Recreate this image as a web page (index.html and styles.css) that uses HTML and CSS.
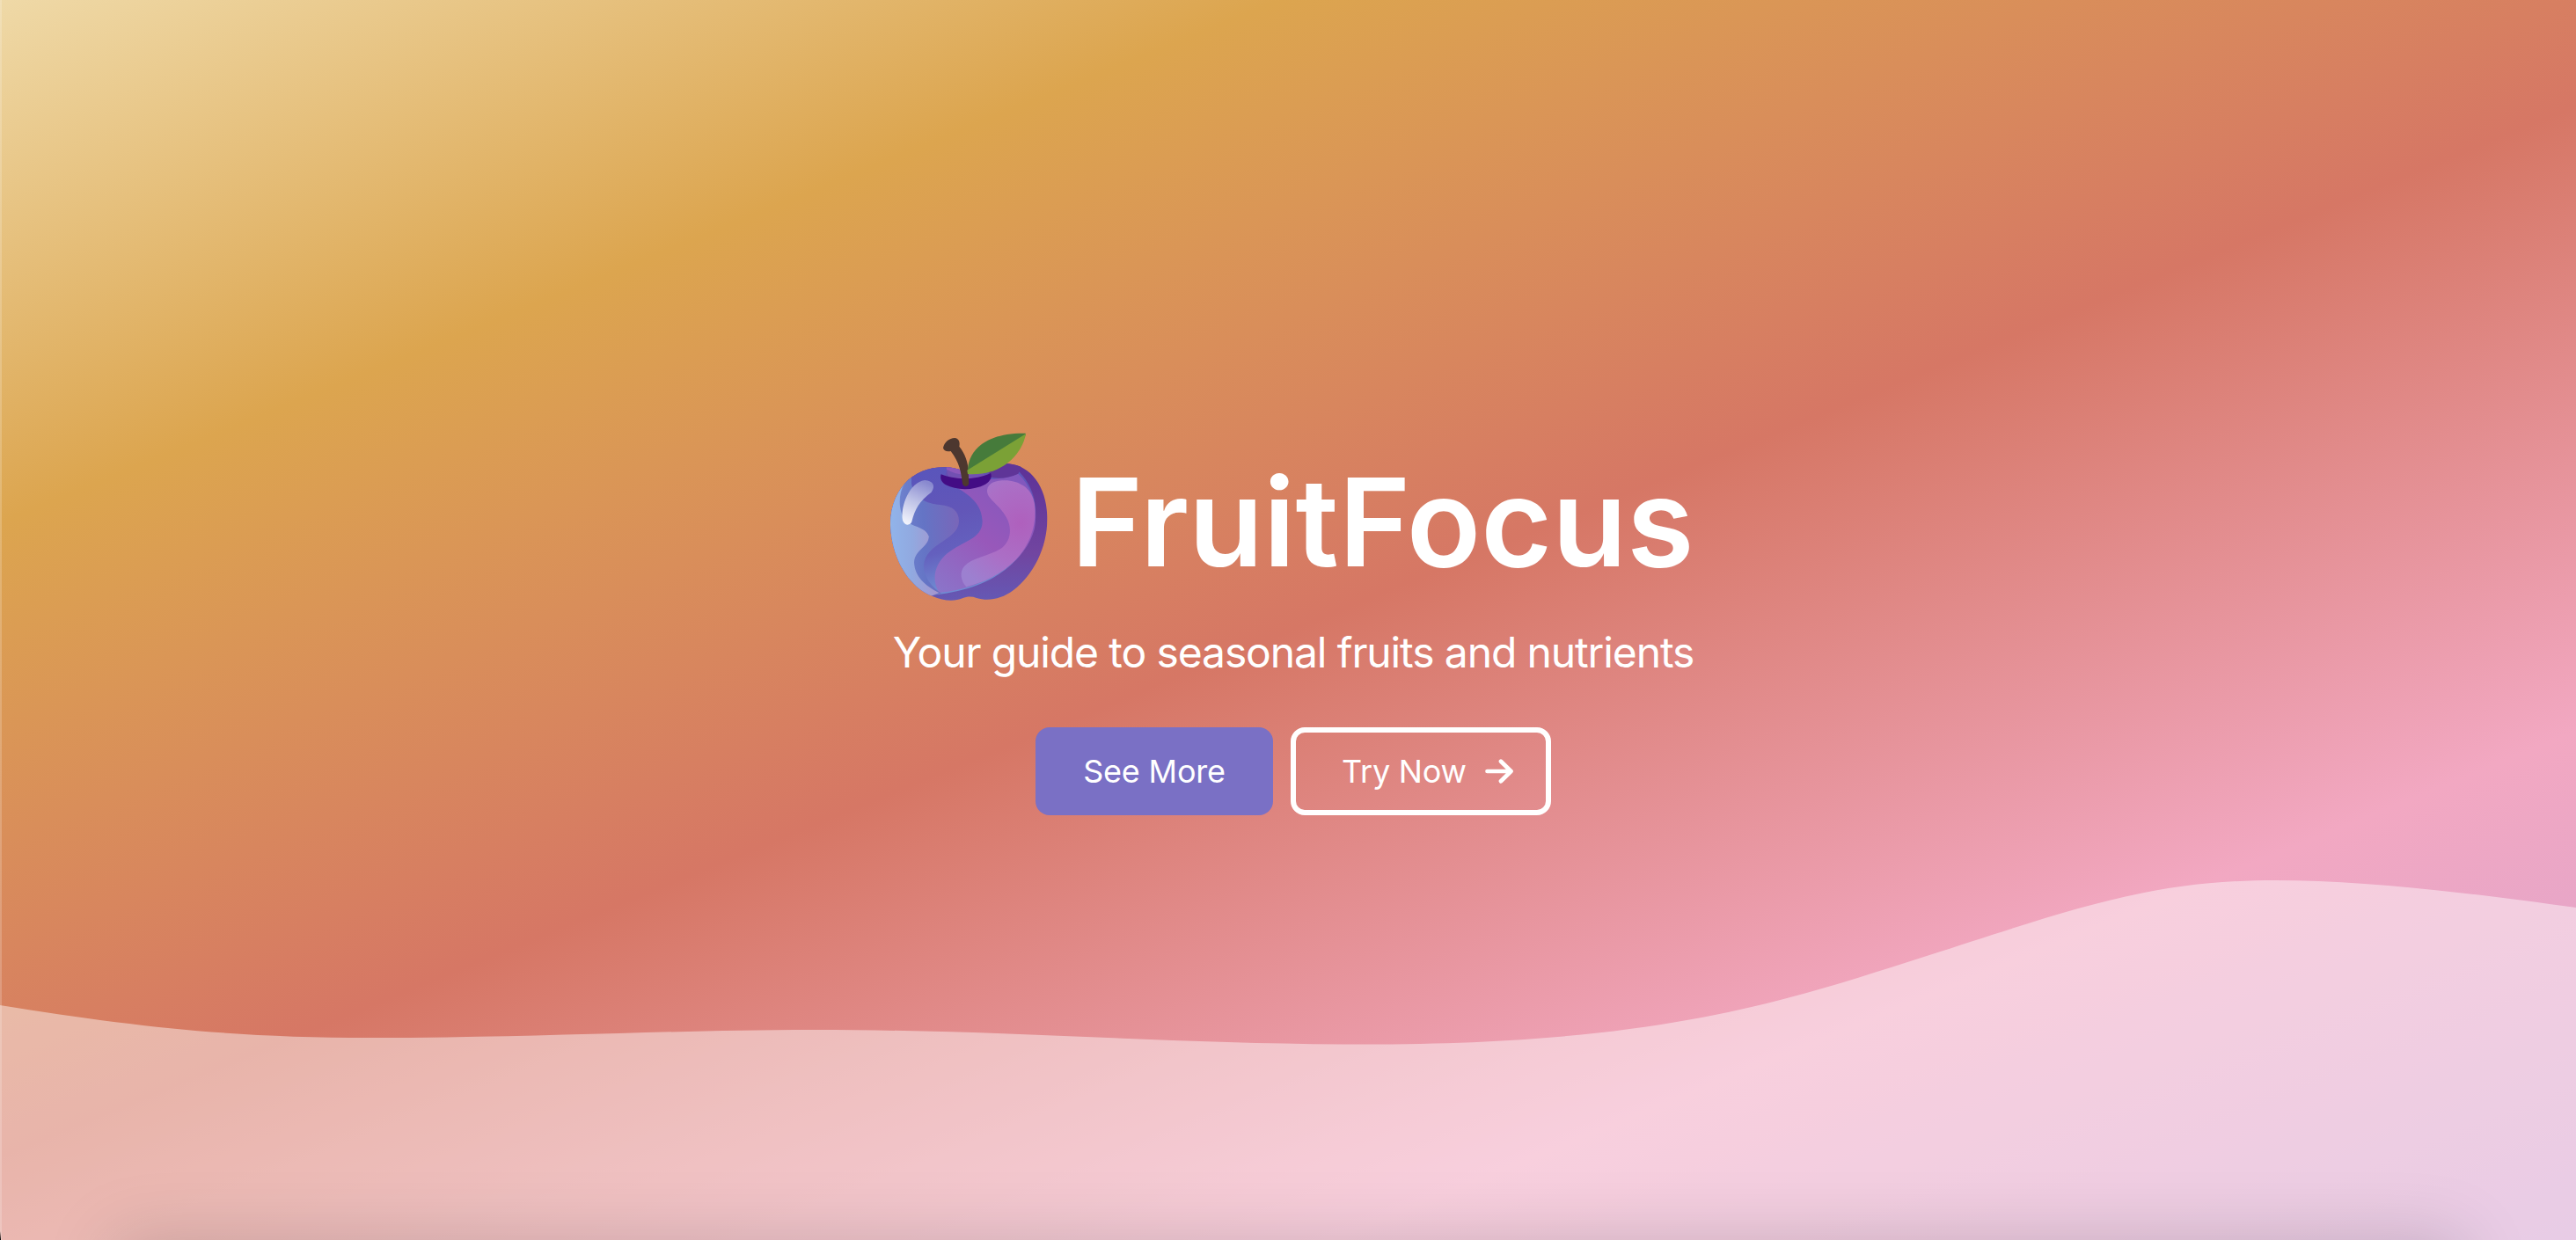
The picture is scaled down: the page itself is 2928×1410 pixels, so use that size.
FILE: index.html
```html
<!DOCTYPE html>
<html lang="en">
<head>
<meta charset="utf-8">
<title>FruitFocus</title>
<link rel="stylesheet" href="styles.css">
</head>
<body>
<main class="hero">
  <svg class="wave" viewBox="0 0 2928 410" preserveAspectRatio="none" aria-hidden="true">
    <path d="M0 143C150 167 260 180 420 180C620 180 760 171 924 171C1150 171 1330 187.500 1550 187.500C1890 187.500 2030 138 2190 87C2350 36 2440 1 2586 1C2690 1 2820 17 2928 32V410H0Z"/>
  </svg>
  <section class="content">
    <div class="brand">
      <svg class="logo" viewBox="0 0 690 690" aria-hidden="true">
        <defs>
          <linearGradient id="base" x1="0" y1="0" x2="0" y2="1"><stop offset="0" stop-color="#5b3096"/><stop offset=".6" stop-color="#7145a0"/><stop offset=".9" stop-color="#6558b4"/></linearGradient>
          <linearGradient id="body" x1="0" y1="0" x2=".3" y2="1"><stop offset="0" stop-color="#5555bd"/><stop offset=".5" stop-color="#6256b8"/><stop offset=".75" stop-color="#6460be"/><stop offset="1" stop-color="#6f8bd2"/></linearGradient>
          <linearGradient id="violet" x1="0" y1="1" x2=".6" y2="0"><stop offset="0" stop-color="#8a76ca"/><stop offset=".5" stop-color="#9858ba"/><stop offset="1" stop-color="#8158be"/></linearGradient>
          <radialGradient id="pink" gradientUnits="userSpaceOnUse" cx="510" cy="375" r="250"><stop offset="0" stop-color="#af60bd"/><stop offset=".55" stop-color="#ab6fc6"/><stop offset="1" stop-color="#9c80d0"/></radialGradient>
          <linearGradient id="mist" x1="0" y1=".5" x2="1" y2=".4"><stop offset="0" stop-color="#7389d2"/><stop offset=".5" stop-color="#6474c5"/><stop offset="1" stop-color="#7966b9"/></linearGradient>
          <linearGradient id="ice" x1="0" y1="0" x2="1" y2="0"><stop offset="0" stop-color="#91b6ec"/><stop offset=".5" stop-color="#91a9e0"/><stop offset="1" stop-color="#a794cd"/></linearGradient>
          <linearGradient id="shine" x1=".6" y1="0" x2=".3" y2="1"><stop offset="0" stop-color="#8989cf"/><stop offset=".5" stop-color="#bfc3e7"/><stop offset="1" stop-color="#f0f2fb"/></linearGradient>
          <clipPath id="apple"><path d="M324 200C285 180 225 177 175 197C105 225 65 300 66 380C70 490 125 590 210 624C245 640 285 643 312 631C328 624 344 624 360 630C400 642 445 634 485 604C555 550 604 455 601 350C598 250 545 178 468 172C420 170 370 200 324 200Z"/></clipPath>
        </defs>
        <g clip-path="url(#apple)">
          <path fill="url(#base)" d="M0 150H690V690H0Z"/>
          <path fill="url(#body)" d="M0 150H430C530 190 570 280 560 365C545 490 420 605 200 620H0Z"/>
          <path fill="url(#violet)" d="M257 150H350L395 225Q450 225 502 206C555 255 570 330 557 395C530 500 405 595 232 612C205 565 217 515 260 478C310 436 380 430 380 368C378 315 345 285 304 260C275 240 252 215 257 150Z"/>
          <path fill="#5f3598" d="M400 150H530L502 206Q450 230 400 216Z"/>
          <path fill="url(#pink)" d="M396 262C400 234 430 228 465 229C515 234 550 260 558 310C572 435 490 550 325 592C305 570 302 540 318 522C345 492 400 488 442 462C480 437 483 385 457 347C430 305 394 290 396 262Z"/>
          <path fill="url(#mist)" d="M138 195V240C148 290 190 308 235 312C280 316 300 335 300 368C298 435 185 440 180 520C180 562 210 595 240 614L190 620L60 500V280Z"/>
          <path fill="#7189d2" d="M138 215C90 255 93 325 115 370L200 420L150 475C135 550 180 590 220 615L70 500V250Z"/>
          <path fill="url(#ice)" d="M115 235C90 280 95 335 115 360C135 390 188 385 197 420C198 455 150 465 147 508C148 555 185 590 232 612L190 630L50 500V260Z"/>
          <path fill="#674dae" opacity=".7" d="M260 192Q310 225 400 194L410 220H250Z"/>
        </g>
        <path fill="#430c85" d="M239 208C280 226 355 230 408 204C414 216 408 231 390 242C350 264 290 263 255 244C238 234 235 220 239 208Z"/>
        <path fill="url(#shine)" d="M108 365C100 315 132 235 183 228C213 230 221 248 206 269C165 300 150 325 139 370C133 384 115 384 108 365Z"/>
        <path fill="#4d372f" d="M246 118C250 98 266 85 286 84C300 86 304 98 301 113C320 137 331 166 332 196L334 240C330 252 316 252 312 240C308 204 302 167 272 129C260 132 248 129 246 118Z"/>
        <path fill="#467b3b" d="M330 205C326 145 370 65 527 68V76Z"/>
        <path fill="#7ba136" d="M328 194L528 70C518 130 455 216 330 207Z"/>
      </svg>
      <h1 class="title">FruitFocus</h1>
    </div>
    <p class="tagline">Your guide to seasonal fruits and nutrients</p>
    <div class="actions">
      <button class="button button-primary">See More</button>
      <button class="button button-outline">Try Now
        <svg class="arrow" viewBox="0 0 32 32" aria-hidden="true"><path d="M2.500 16H29.500M18 4.700L29.500 16L18 27.300"/></svg>
      </button>
    </div>
  </section>
  <div class="bottom-shade"></div>
</main>
</body>
</html>
```
FILE: styles.css
```css
* { box-sizing: border-box; }
body { margin: 0; }
.hero {
  position: relative;
  height: 1410px;
  overflow: hidden;
  color: #fff;
  font-family: Inter, "Liberation Sans", sans-serif;
  background: linear-gradient(157.8deg, #efd9a7 0%, #dca54f 22.8%, #d67765 50.5%, #f2a8c2 77.8%, #d5a2d1 100%);
}
.hero::before {
  content: "";
  position: absolute;
  inset: 0 auto 0 0;
  width: 2px;
  background: rgba(255, 255, 255, .2);
}
.hero::after {
  content: "";
  position: absolute;
  left: 0;
  bottom: 0;
  width: 1px;
  height: 10px;
  background: linear-gradient(transparent, #000);
}
.wave {
  position: absolute;
  left: 0;
  bottom: 0;
  width: 100%;
  height: 410px;
  fill: #fff;
  fill-opacity: .45;
}
.bottom-shade {
  position: absolute;
  left: 130px;
  right: 130px;
  bottom: -120px;
  height: 120px;
  box-shadow: 0 0 80px rgba(0, 0, 0, .17);
}
.content {
  position: relative;
  display: flex;
  flex-direction: column;
  align-items: center;
  padding: 470px 0 0 12px;
}
.brand { display: flex; align-items: flex-start; height: 230px; padding-right: 25px; }
.logo { width: 230px; height: 230px; }
.title { margin: 37px 0 0 -2px; font-size: 138.8px; line-height: 174px; font-weight: 600; }
.tagline { margin: 13px 0 0; font-size: 48px; line-height: 58px; font-weight: 400; letter-spacing: -1.12px; }
.actions { display: flex; gap: 20px; margin-top: 56px; }
.button {
  display: flex;
  align-items: center;
  justify-content: center;
  height: 100px;
  border: 0;
  border-radius: 16px;
  color: #fff;
  font: 400 36px/44px Inter, "Liberation Sans", sans-serif;
  letter-spacing: -.2px;
}
.button-primary { width: 270px; background: #7a70c5; }
.button-outline { width: 296px; justify-content: flex-start; padding: 0 0 0 52px; gap: 21px; border: 6px solid #fff; background: transparent; }
.arrow { width: 32px; height: 32px; fill: none; stroke: #fff; stroke-width: 4.700; stroke-linecap: round; stroke-linejoin: round; }
```
